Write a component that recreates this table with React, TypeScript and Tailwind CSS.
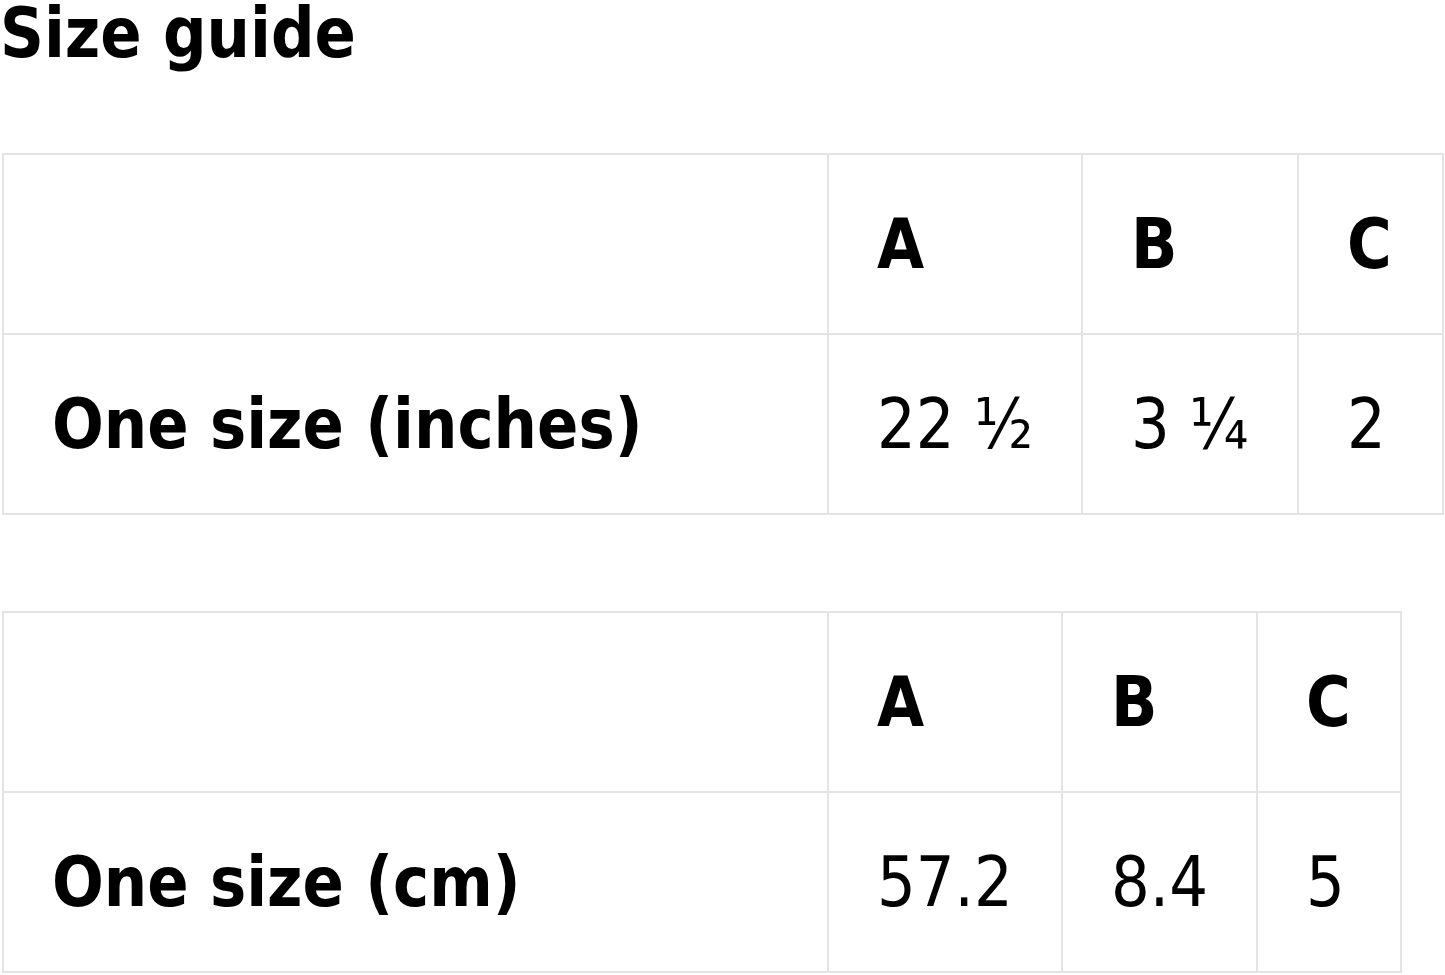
import React from "react";

const font = { fontFamily: '"DejaVu Sans", Verdana, sans-serif' };

type Tbl = { label: string; values: string[]; set: number };

const COLS = [
  ["w-[825px]", "w-[254px]", "w-[216px]", "w-[145px]"],
  ["w-[825px]", "w-[234px]", "w-[195px]", "w-[144px]"],
];

function T({ children }: { children: React.ReactNode }) {
  return <span className="inline-block origin-center scale-y-[1.14]">{children}</span>;
}

function SizeTable({ label, values, set }: Tbl) {
  const cls = COLS[set];
  return (
    <div className="ml-[2px] flex flex-col self-start border-l-2 border-t-2 border-[#e4e4e4]">
      <div className="flex h-[180px]">
        <div className={`${cls[0]} border-b-2 border-r-2 border-[#e4e4e4]`} />
        {["A", "B", "C"].map((h, i) => (
          <div
            key={h}
            className={`${cls[i + 1]} flex items-center border-b-2 border-r-2 border-[#e4e4e4] pl-[48px] text-[61px] font-bold`}
          >
            <T>{h}</T>
          </div>
        ))}
      </div>
      <div className="flex h-[180px]">
        <div className={`${cls[0]} flex items-center border-b-2 border-r-2 border-[#e4e4e4] pl-[48px] text-[61px] font-bold`}>
          <T>{label}</T>
        </div>
        {values.map((v, i) => (
          <div
            key={i}
            className={`${cls[i + 1]} flex items-center border-b-2 border-r-2 border-[#e4e4e4] pl-[48px] text-[61px]`}
          >
            <T>{v}</T>
          </div>
        ))}
      </div>
    </div>
  );
}

export default function App() {
  return (
    <div className="flex h-[975px] w-[1445px] flex-col bg-white text-black" style={font}>
      <h1 className="pb-[8px] text-[61px] font-bold leading-[66px]">
        <T>Size guide</T>
      </h1>
      <div className="mt-[79px] flex flex-col gap-[96px]">
        <SizeTable label="One size (inches)" values={["22 ½", "3 ¼", "2"]} set={0} />
        <SizeTable label="One size (cm)" values={["57.2", "8.4", "5"]} set={1} />
      </div>
    </div>
  );
}
